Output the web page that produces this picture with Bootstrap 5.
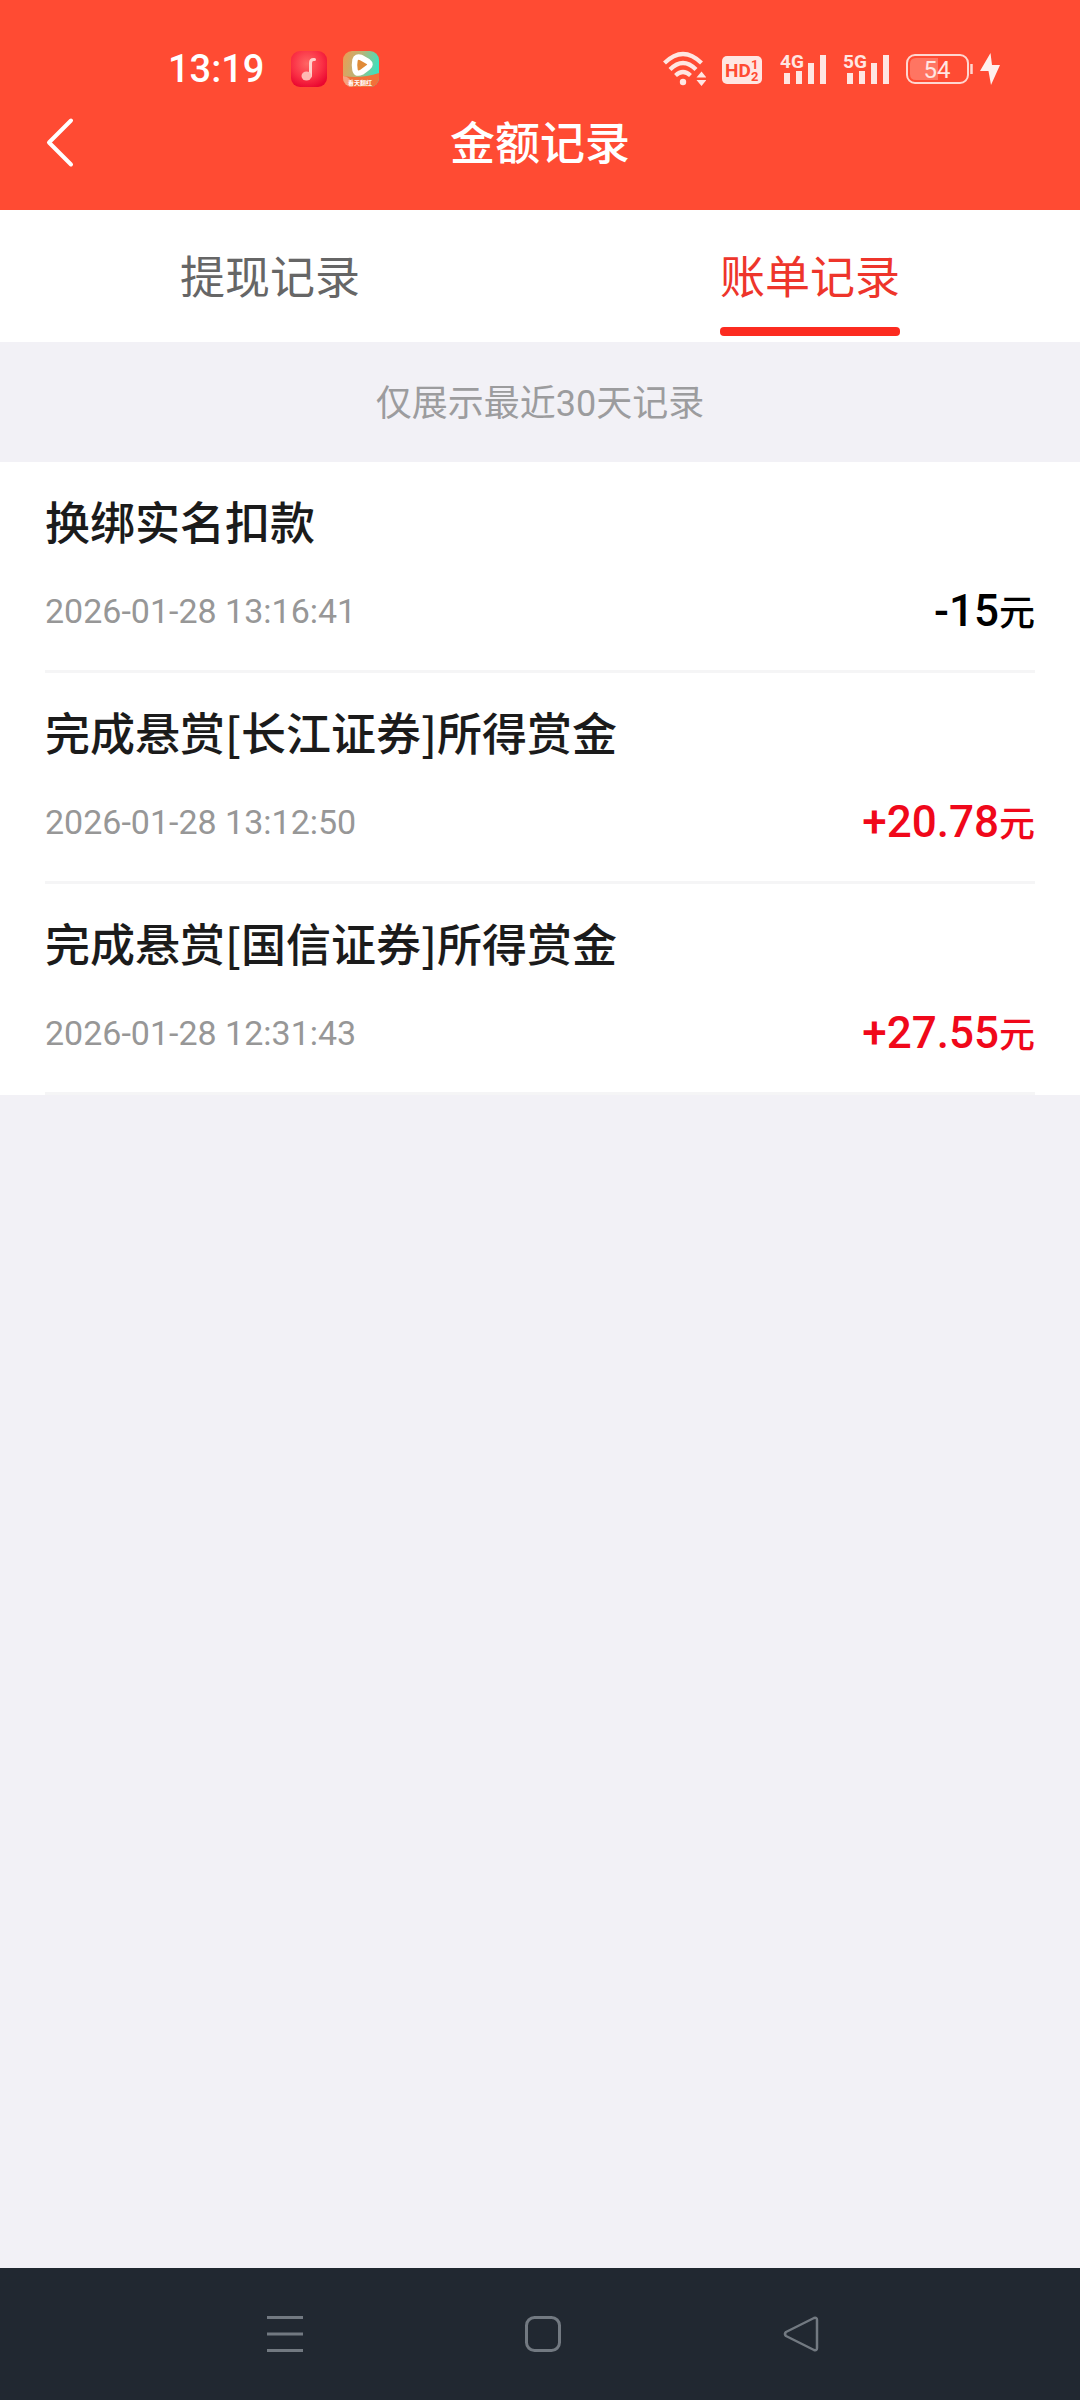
<!DOCTYPE html>
<html lang="zh-CN">
<head>
<meta charset="utf-8">
<meta name="viewport" content="width=device-width, initial-scale=1">
<title>金额记录</title>
<link rel="stylesheet" href="https://cdn.jsdelivr.net/npm/bootstrap@5.3.0/dist/css/bootstrap.min.css">
<style>
  body { background: #f2f1f6; font-family: Roboto, "Noto Sans CJK SC", sans-serif; color: #1b1b1b; }
  svg { display: block; flex: none; }
  svg text { font-family: Roboto, sans-serif; }
  .top-area { background: #ff4b33; padding-bottom: 22px; }
  .status-bar { height: 100px; padding: 38px 80px 0 168px; }
  .clock { font-size: 38px; line-height: 60px; font-weight: 500; margin-right: 27px; }
  .signals { gap: 16px; }
  .power { gap: 7px; }
  .app-bar { height: 88px; padding: 0 40px; }
  .side-slot { width: 56px; }
  .app-title { font-size: 45px; line-height: 50px; font-weight: 500; padding-top: 2px; }
  .record-tabs { height: 132px; }
  .record-tabs .nav-link { padding: 44px 0 0; font-size: 45px; line-height: 50px; color: #666; }
  .tab-label { display: inline-block; height: 82px; }
  .record-tabs .nav-link.active { color: #ee352b; }
  .active .tab-label { position: relative; }
  .active .tab-label::after { content: ""; position: absolute; left: 0; right: 0; bottom: 0; height: 9px; border-radius: 4px; background: #fc2b20; }
  .notice { font-size: 36px; line-height: 50px; padding: 37px 0 33px; color: #9c9c9e; }
  .records { padding: 0 45px; }
  .record { padding: 34px 0; border-bottom: 3px solid #f5f5f6; }
  .record-name { font-family: "Noto Sans CJK SC", sans-serif; font-size: 45px; line-height: 50px; font-weight: 500; margin: 0 0 40px; }
  .record-line { height: 50px; }
  .record-time { font-size: 34px; line-height: 50px; color: #979797; }
  .amount { font-size: 44px; line-height: 50px; font-weight: 500; color: #000; }
  .amount .unit { font-size: 36px; line-height: 1; }
  .amount.income { color: #f0081a; }
  .system-nav { height: 132px; background: #212831; padding: 0 150px 0 156px; }
</style>
</head>
<body>
<div class="d-flex flex-column min-vh-100">
  <header class="top-area text-white">
    <div class="status-bar d-flex align-items-center">
      <span class="clock">13:19</span>
      <div class="d-flex signals">
        <svg width="36" height="36" viewBox="0 0 36 36" aria-hidden="true">
          <defs><radialGradient id="music" cx=".45" cy=".35" r=".7"><stop offset="0" stop-color="#ff6664"/><stop offset=".6" stop-color="#fa3045"/><stop offset="1" stop-color="#ea0630"/></radialGradient></defs>
          <rect width="36" height="36" rx="9" fill="url(#music)"/>
          <path d="M23.500 8.500h-1q-3 0-3 3.500V25" fill="none" stroke="#ffd0cc" stroke-width="3" stroke-linecap="round"/>
          <ellipse cx="15.500" cy="25" rx="5" ry="4.500" fill="#ffb8b3"/>
        </svg>
        <svg width="36" height="36" viewBox="0 0 36 36" aria-hidden="true">
          <defs>
            <linearGradient id="video" y2=".3"><stop offset="0" stop-color="#ef9a50"/><stop offset=".5" stop-color="#b9b478"/><stop offset="1" stop-color="#3fe0bd"/></linearGradient>
            <clipPath id="tile"><rect width="36" height="36" rx="9"/></clipPath>
          </defs>
          <g clip-path="url(#tile)">
            <rect width="36" height="36" fill="url(#video)"/>
            <path d="M0 25q18 3 36-3v14H0z" fill="#f2713a"/>
            <path d="M0 25q8 0 9 11H0z" fill="#f8a080"/>
            <path d="M12 9q1-4 6-2.500l7 4q4 3 0 6l-6 4.500q-6 3-7-2-1-5 0-10z" fill="#e08a38" stroke="#fff" stroke-width="5.500" stroke-linejoin="round"/>
            <text x="5" y="34" font-size="6" font-weight="700" fill="#fff" style="font-family:'Noto Sans CJK SC'">看天翻红</text>
          </g>
        </svg>
      </div>
      <div class="d-flex align-items-center signals ms-auto">
        <svg width="44" height="36" viewBox="0 0 44 36" aria-label="Wi-Fi">
          <g fill="none" stroke="#ffe6e2" stroke-width="4.200">
            <path d="M2.500 12q18.500-18 37 0M8 18.500q13-13 26 0M13.500 24.500q7.500-7 15 0"/>
          </g>
          <circle cx="21" cy="31" r="3.200" fill="#ffe6e2"/>
          <path d="M39.500 20.500l5 6h-10zM39.500 35l5-6h-10z" fill="#ffe6e2"/>
        </svg>
        <svg width="42" height="36" viewBox="0 0 42 36" aria-label="HD">
          <rect y="5" width="40" height="28" rx="5" fill="#ffe6e2"/>
          <g fill="#ff4b33" font-weight="700">
            <text x="3" y="26" font-size="19">HD</text>
            <text x="29" y="18" font-size="13">1</text>
            <text x="29" y="30" font-size="13">2</text>
          </g>
        </svg>
        <svg width="47" height="36" viewBox="0 0 47 36" aria-label="4G">
          <text x="0" y="17" font-size="19" font-weight="700" fill="#ffe6e2">4G</text>
          <path d="M4 22h6v11H4zM16 20h6v13h-6zM28 12h6v21h-6zM40 4h6v29h-6z" fill="#ffe6e2"/>
        </svg>
        <svg width="47" height="36" viewBox="0 0 47 36" aria-label="5G">
          <text x="0" y="17" font-size="19" font-weight="700" fill="#ffe6e2">5G</text>
          <path d="M4 22h6v11H4zM16 20h6v13h-6zM28 12h6v21h-6zM40 4h6v29h-6z" fill="#ffe6e2"/>
        </svg>
        <div class="d-flex power">
          <svg width="67" height="36" viewBox="0 0 67 36" aria-label="54%">
            <path d="M10 7h22v22H10q-6 0-6-6V13q0-6 6-6z" fill="#ff7562"/>
            <rect x="1" y="4" width="61" height="28" rx="8" fill="none" stroke="#ffd6d0" stroke-width="2"/>
            <path d="M65.500 13v10" stroke="#ffd6d0" stroke-width="2.500"/>
            <text x="31" y="26.500" font-size="24" text-anchor="middle" fill="#ffe6e2">54</text>
          </svg>
          <svg width="20" height="36" viewBox="0 0 20 36" aria-hidden="true"><path d="M10.500 2L0 20h8.500L11 34l9-20h-8z" fill="#fff0ee"/></svg>
        </div>
      </div>
    </div>
    <div class="app-bar d-flex align-items-center justify-content-between">
      <button type="button" class="side-slot btn border-0 p-0" aria-label="返回">
        <svg width="40" height="56" viewBox="0 0 40 56"><path d="M31 4.500L9 26.500 31 48.500" fill="none" stroke="#fff" stroke-width="4" stroke-linecap="round" stroke-linejoin="round"/></svg>
      </button>
      <h1 class="app-title m-0">金额记录</h1>
      <span class="side-slot"></span>
    </div>
  </header>

  <nav class="nav nav-justified record-tabs bg-white">
    <a class="nav-link" href="#withdraw"><span class="tab-label">提现记录</span></a>
    <a class="nav-link active" href="#bill" aria-current="page"><span class="tab-label">账单记录</span></a>
  </nav>

  <main class="flex-grow-1" id="bill">
    <p class="notice text-center m-0">仅展示最近30天记录</p>
    <ul class="records list-unstyled bg-white m-0">
      <li class="record">
        <h2 class="record-name">换绑实名扣款</h2>
        <div class="record-line d-flex justify-content-between">
          <time class="record-time">2026-01-28 13:16:41</time>
          <span class="amount">-15<span class="unit">元</span></span>
        </div>
      </li>
      <li class="record">
        <h2 class="record-name">完成悬赏[长江证券]所得赏金</h2>
        <div class="record-line d-flex justify-content-between">
          <time class="record-time">2026-01-28 13:12:50</time>
          <span class="amount income">+20.78<span class="unit">元</span></span>
        </div>
      </li>
      <li class="record">
        <h2 class="record-name">完成悬赏[国信证券]所得赏金</h2>
        <div class="record-line d-flex justify-content-between">
          <time class="record-time">2026-01-28 12:31:43</time>
          <span class="amount income">+27.55<span class="unit">元</span></span>
        </div>
      </li>
    </ul>
  </main>

  <footer class="system-nav d-flex align-items-center">
    <button type="button" class="btn border-0 p-0 flex-fill" aria-label="最近任务">
      <svg class="mx-auto" width="36" height="36" viewBox="0 0 36 36"><path d="M0 1.500h36M0 18h36M0 34.500h36" stroke="#727981" stroke-width="3"/></svg>
    </button>
    <button type="button" class="btn border-0 p-0 flex-fill" aria-label="主页">
      <svg class="mx-auto" width="36" height="36" viewBox="0 0 36 36"><rect x="1.500" y="1.500" width="33" height="33" rx="8" fill="none" stroke="#727981" stroke-width="3"/></svg>
    </button>
    <button type="button" class="btn border-0 p-0 flex-fill" aria-label="返回上一页">
      <svg class="mx-auto" width="36" height="36" viewBox="0 0 36 36"><path d="M31 2L3 16q-2 2 0 4l28 14q3 1 3-2V4q0-3-3-2z" fill="none" stroke="#727981" stroke-width="2.500" stroke-linejoin="round"/></svg>
    </button>
  </footer>
</div>
<script src="https://cdn.jsdelivr.net/npm/bootstrap@5.3.0/dist/js/bootstrap.bundle.min.js"></script>
</body>
</html>
